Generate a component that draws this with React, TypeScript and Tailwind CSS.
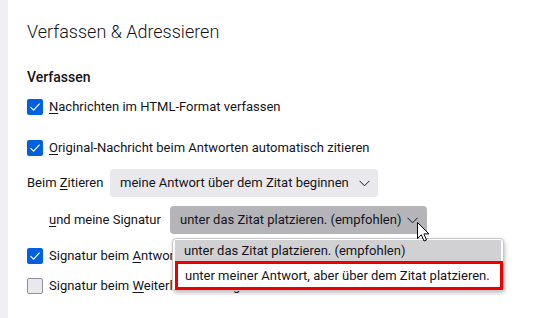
import React from "react";

const font = { fontFamily: 'Roboto, "Noto Sans", sans-serif' };

function Check({ checked }: { checked: boolean }) {
  return checked ? (
    <span className="flex h-[16px] w-[16px] shrink-0 items-center justify-center rounded-[2px] bg-[#0061e0]">
      <svg width="12" height="12" viewBox="0 0 12 12" fill="none">
        <path d="M1.5 6.2 L4.6 9.2 L10.6 2.6" stroke="white" strokeWidth="1.1" />
      </svg>
    </span>
  ) : (
    <span className="h-[16px] w-[16px] shrink-0 rounded-[2px] border border-[#8f8f9d] bg-[#e9e9ed]" />
  );
}

function Chevron() {
  return (
    <svg width="11" height="7" viewBox="0 0 11 7" fill="none">
      <path d="M0.5 0.8 L5.5 5.8 L10.5 0.8" stroke="#15141a" strokeWidth="1" />
    </svg>
  );
}

function U({ children }: { children: React.ReactNode }) {
  return <span className="underline underline-offset-[2px]">{children}</span>;
}

export default function App() {
  return (
    <div className="flex h-[318px] w-[537px] overflow-hidden whitespace-nowrap bg-white text-[#15141a]" style={font}>
      <div className="w-[8px] shrink-0 bg-[#f0f0f4]" />
      <div className="flex flex-col pl-[19px] pt-[20px] text-[13px]">
        <div className="h-[24px] text-[18px] font-light leading-[24px]">Verfassen &amp; Adressieren</div>
        <div className="mt-[23px] h-[20px] text-[14px] font-medium leading-[20px]">Verfassen</div>
        <div className="mt-[10px] flex h-[20px] items-center gap-[6px]">
          <Check checked />
          <span><U>N</U>achrichten im HTML-Format verfassen</span>
        </div>
        <div className="mt-[21px] flex h-[20px] items-center gap-[6px]">
          <Check checked />
          <span><U>O</U>riginal-Nachricht beim Antworten automatisch zitieren</span>
        </div>
        <div className="mt-[11px] flex h-[28px] items-center">
          <span className="w-[83px]">Beim <U>Z</U>itieren</span>
          <div className="flex h-[28px] w-[268px] items-center justify-between rounded-[4px] bg-[#e9e9ed] pl-[10px] pr-[8px]">
            <span>meine Antwort über dem Zitat beginnen</span>
            <Chevron />
          </div>
        </div>
        <div className="mt-[9px] flex h-[28px] items-center pl-[22px]">
          <span className="w-[121px]"><U>u</U>nd meine Signatur</span>
          <div className="relative">
            <div className="flex h-[28px] w-[257px] items-center justify-between rounded-[4px] bg-[#b4b4b9] pl-[10px] pr-[9px]">
              <span>unter das Zitat platzieren. (empfohlen)</span>
              <Chevron />
            </div>
            <div className="absolute left-[2px] top-[32px] z-10 w-[332px] rounded-[4px] border border-[#c8c8cc] bg-white pb-[0px] pl-[2px] pt-[1px] shadow-[1px_2px_4px_rgba(0,0,0,0.25)]">
              <div className="flex h-[21px] w-[326px] items-center bg-[#d1d1d3] pl-[9px]">unter das Zitat platzieren. (empfohlen)</div>
              <div className="flex h-[29px] items-center border-[3px] border-[#ee0000] pl-[7px]">unter meiner Antwort, aber über dem Zitat platzieren.</div>
            </div>
            <svg className="absolute left-[247px] top-[16px] z-20" width="14" height="21" viewBox="0 0 14 21">
              <path d="M0.5 0.5 L0.5 16.5 L4.3 12.8 L7 19 L9.5 18 L6.9 11.9 L12 11.9 Z" fill="white" stroke="black" strokeWidth="1" strokeLinejoin="miter" />
            </svg>
          </div>
        </div>
        <div className="mt-[12px] flex h-[20px] items-center gap-[6px]">
          <Check checked />
          <span>Signatur beim <U>A</U>ntworten einfügen</span>
        </div>
        <div className="mt-[10px] flex h-[20px] items-center gap-[6px]">
          <Check checked={false} />
          <span>Signatur beim <U>W</U>eiterleiten einfügen</span>
        </div>
      </div>
    </div>
  );
}
